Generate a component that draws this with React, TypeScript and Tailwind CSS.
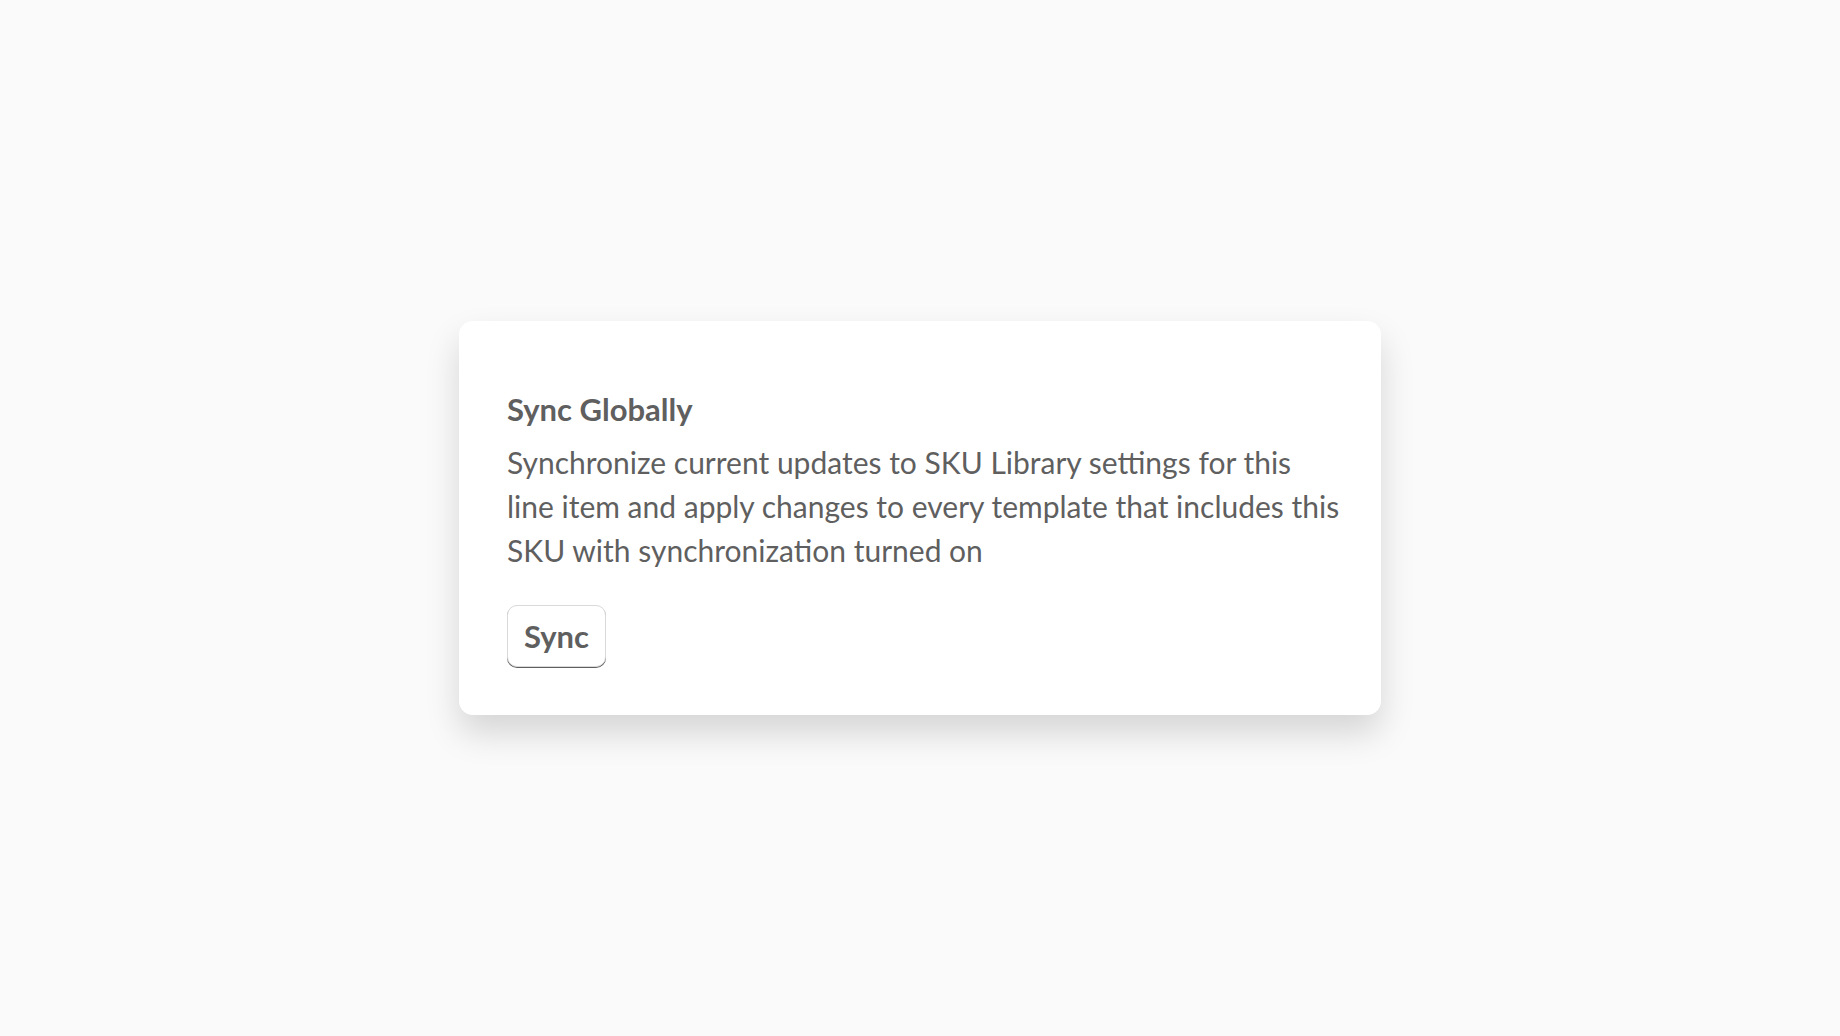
export default function App() {
  return (
    <div
      className="flex h-[1036px] w-full items-center justify-center bg-[#fafafa]"
      style={{ fontFamily: 'Lato, "Open Sans", sans-serif' }}
    >
      <div className="w-[922px] rounded-[14px] bg-white pb-12 pl-12 pr-9 pt-[70px] shadow-[0_18px_34px_rgba(0,0,0,0.15)]">
        <h2 className="text-[31px] font-bold leading-[36px] text-[#5f5f5f]">Sync Globally</h2>
        <p className="mt-[13px] text-[30px] leading-[44px] text-[#5f5f5f]">
          Synchronize current updates to SKU Library settings for this line item and apply changes to every
          template that includes this SKU with synchronization turned on
        </p>
        <button className="mt-[33px] flex h-[62px] items-center rounded-[10px] border border-[#d9d9d9] bg-white px-4 text-[31px] font-bold text-[#5f5f5f] shadow-[0_1px_0_#5f5f5f]">
          Sync
        </button>
      </div>
    </div>
  );
}
